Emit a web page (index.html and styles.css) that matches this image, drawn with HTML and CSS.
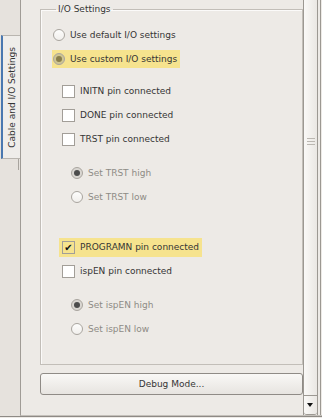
FILE: index.html
```html
<!DOCTYPE html>
<html lang="en">
<head>
  <meta charset="UTF-8" />
  <title>Cable and I/O Settings</title>
  <link rel="stylesheet" href="styles.css">
</head>
<body>
  <div class="window">
    <!-- notebook tabs -->
    <div class="side">
      <div class="tab"><span>Cable and I/O Settings</span></div>
    </div>

    <div class="page">
      <div class="content">
        <fieldset class="frame">
          <legend>I/O Settings</legend>

          <div class="row">
            <label class="opt"><span class="radio"></span>Use default I/O settings</label>
          </div>
          <div class="row">
            <label class="opt hl"><span class="radio on"></span>Use custom I/O settings</label>
          </div>

          <div class="row check first">
            <label class="opt"><span class="box"></span>INITN pin connected</label>
          </div>
          <div class="row check">
            <label class="opt"><span class="box"></span>DONE pin connected</label>
          </div>
          <div class="row check">
            <label class="opt"><span class="box"></span>TRST pin connected</label>
          </div>

          <div class="row sub first">
            <label class="opt off"><span class="radio on"></span>Set TRST high</label>
          </div>
          <div class="row sub">
            <label class="opt off"><span class="radio"></span>Set TRST low</label>
          </div>

          <div class="row check gap">
            <label class="opt hl"><span class="box on">&#10004;</span>PROGRAMN pin connected</label>
          </div>
          <div class="row check">
            <label class="opt"><span class="box"></span>ispEN pin connected</label>
          </div>

          <div class="row sub first">
            <label class="opt off"><span class="radio on"></span>Set ispEN high</label>
          </div>
          <div class="row sub">
            <label class="opt off"><span class="radio"></span>Set ispEN low</label>
          </div>
        </fieldset>

        <button class="debug">Debug Mode...</button>
      </div>

      <div class="scrollbar">
        <div class="thumb"><div class="grip"></div></div>
        <div class="arrow"></div>
      </div>
      <div class="edge"></div>
    </div>
  </div>
</body>
</html>
```

FILE: styles.css
```css
* {
  box-sizing: border-box;
}

body {
  margin: 0;
  width: 322px;
  height: 418px;
  overflow: hidden;
  background: #edeae6;
  font-family: 'DejaVu Sans', sans-serif;
  font-size: 9px;
  color: #353535;
}

.window {
  display: flex;
  height: 417px;
  border-bottom: 1px solid #8e8a85;
}

/* left tab strip */
.side {
  width: 20px;
  padding-top: 35px;
  background: #e6e2dd;
  position: relative;
}

.side::after {
  content: "";
  position: absolute;
  left: 18px;
  top: 159px;
  width: 1px;
  height: 11px;
  background: #a8a49e;
}

.tab {
  height: 124px;
  margin-left: 1px;
  background: #efedea;
  border-left: 2px solid #4a78b0;
  border-top: 1px solid #b9b5af;
  border-bottom: 1px solid #b9b5af;
  display: flex;
  align-items: center;
  justify-content: center;
}

.tab span {
  writing-mode: vertical-rl;
  transform: rotate(180deg);
  line-height: 12px;
  margin-left: 1px;
  white-space: nowrap;
}

/* page */
.page {
  flex: 1;
  display: flex;
  border-left: 1px solid #a09c96;
  border-bottom: 1px solid #c4c0ba;
  background: #edeae6;
}

.content {
  flex: 1;
  padding: 3px 0 0 19px;
}

.frame {
  margin: 0;
  padding: 8px 0 23px 11px;
  border: 1px solid #c2beb8;
  box-shadow: inset 1px 1px 0 #fbfaf9;
}

.frame legend {
  padding: 0 2px;
  margin-left: 4px;
  line-height: 12px;
}

.row {
  height: 24px;
  display: flex;
  align-items: center;
}

.row.check {
  padding-left: 7px;
}

.row.sub {
  padding-left: 18px;
}

.row.first {
  margin-top: 8px;
}

.row.sub.first {
  margin-top: 10px;
}

.row.gap {
  margin-top: 26px;
}

.opt {
  display: inline-flex;
  align-items: center;
  gap: 5px;
  padding: 3px 3px 3px 1px;
  line-height: 12px;
  white-space: nowrap;
}

.row.check .opt {
  padding-left: 3px;
}

.opt.hl {
  background: #f6e38e;
}

.opt.off {
  color: #8d8a85;
}

.radio {
  width: 12px;
  height: 12px;
  border-radius: 50%;
  border: 1px solid #a9a59f;
  background: linear-gradient(#fdfdfc, #f1efec);
  display: flex;
  align-items: center;
  justify-content: center;
}

.radio.on {
  background: #d9d6d1;
}

.hl .radio.on {
  background: #cfc591;
}

.radio.on::after {
  content: "";
  width: 6px;
  height: 6px;
  border-radius: 50%;
  background: #4c4c4c;
}

.hl .radio.on::after {
  background: #8a7f4a;
}

.box {
  width: 13px;
  height: 13px;
  border: 1px solid #a29e98;
  background: #fff;
  font-size: 10px;
  line-height: 11px;
  text-align: center;
  color: #111;
}

.box.on {
  background: transparent;
}

.debug {
  display: block;
  width: 263px;
  height: 22px;
  margin-top: 8px;
  padding: 0;
  border: 1px solid #8f8b86;
  border-radius: 3px;
  background: linear-gradient(#f9f8f6, #e7e4e0);
  font-family: inherit;
  font-size: 9px;
  color: #353535;
}

/* scrollbar */
.scrollbar {
  width: 15px;
  display: flex;
  flex-direction: column;
  border-left: 1px solid #9c9892;
  border-right: 1px solid #9c9892;
}

.thumb {
  flex: 1;
  background: linear-gradient(to right, #faf9f7, #eae7e3);
  padding: 138px 0 0 3px;
}

.grip {
  width: 8px;
  height: 7px;
  background: repeating-linear-gradient(#bbb7b1 0 1px, transparent 1px 3px);
}

.arrow {
  height: 20px;
  border-top: 1px solid #9c9892;
  border-bottom: 1px solid #9c9892;
  border-radius: 0 0 3px 3px;
  background: linear-gradient(to right, #faf9f7, #eae7e3);
  display: flex;
  align-items: center;
  justify-content: center;
}

.arrow::after {
  content: "";
  border-left: 3px solid transparent;
  border-right: 3px solid transparent;
  border-top: 4px solid #111;
  margin-left: -1px;
}

.edge {
  width: 4px;
  background: linear-gradient(to right, #edeae6 2px, #9c9892 2px 3px, #edeae6 3px);
}
```
